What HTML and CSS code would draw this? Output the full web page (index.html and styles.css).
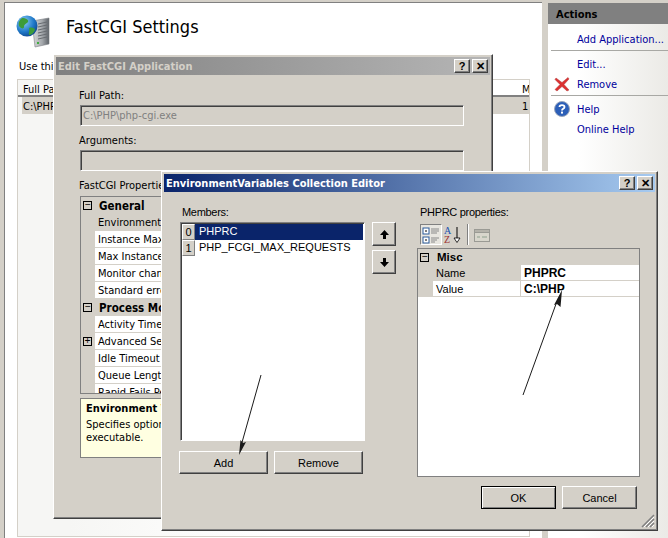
FILE: index.html
```html
<!DOCTYPE html>
<html lang="en">
<head>
    <meta charset="UTF-8">
    <meta name="viewport" content="width=device-width, initial-scale=1.0">
    <title>FastCGI Settings</title>
    <link rel="stylesheet" href="styles.css">
</head>
<body>
<div class="desktop">
    <div class="main">
        <div class="page-head">
            <svg class="page-icon" width="36" height="34" viewBox="0 0 36 34">
                <defs>
                    <linearGradient id="srv" x1="0" x2="1" y1="0" y2="0">
                        <stop offset="0" stop-color="#dcdcdc"/>
                        <stop offset="0.6" stop-color="#a4a8ac"/>
                        <stop offset="1" stop-color="#5d6268"/>
                    </linearGradient>
                    <radialGradient id="glb" cx="0.35" cy="0.3" r="0.8">
                        <stop offset="0" stop-color="#8fd0f5"/>
                        <stop offset="0.6" stop-color="#1f78c8"/>
                        <stop offset="1" stop-color="#0d3f86"/>
                    </radialGradient>
                </defs>
                <path d="M16 6 L33 3 V29 L19 32 Z" fill="url(#srv)" stroke="#7c8084" stroke-width="0.6"/>
                <path d="M22 9 L31 7 M22 12 L31 10 M22 15 L31 13 M22 18 L31 16 M22 21 L31 19 M22 24 L31 22" stroke="#676b70" stroke-width="1"/>
                <rect x="21" y="27" width="2" height="2" fill="#3fae3f"/>
                <circle cx="11" cy="11" r="10.5" fill="url(#glb)"/>
                <path d="M6 3 C10 3 13 5 12 7 C10 9 8 9 8 12 C8 14 5 14 3 11 C2 8 3 5 6 3 Z M13 13 C16 12 19 13 19 15 C18 18 15 20 13 20 C12 18 14 16 13 13 Z" fill="#3d9c3a"/>
            </svg>
            <h1 class="page-title">FastCGI Settings</h1>
        </div>
        <p class="page-hint">Use this feature to configure FastCGI</p>
        <div class="app-list">
            <div class="app-head">
                <span class="col-path">Full Path</span>
                <span class="col-max">Max</span>
            </div>
            <div class="app-row">
                <span class="col-path">C:\PHP\php-cgi.exe</span>
                <span class="col-max">1</span>
            </div>
        </div>
    </div>

    <div class="actions">
        <div class="actions-head">Actions</div>
        <ul class="action-group">
            <li class="action">Add Application...</li>
        </ul>
        <ul class="action-group">
            <li class="action">Edit...</li>
            <li class="action">
                <svg class="action-icon" width="16" height="16" viewBox="0 0 16 16">
                    <path d="M2 2 L8 6.5 L14 1.5 L15 3 L10 8.5 L15 14 L13 15 L8 10.5 L3 15 L1 13.5 L6 8.5 L1 3.5 Z" fill="#dc3030" stroke="#b04040" stroke-width="0.5"/>
                </svg>
                Remove
            </li>
        </ul>
        <ul class="action-group">
            <li class="action">
                <svg class="action-icon" width="16" height="16" viewBox="0 0 16 16">
                    <circle cx="8" cy="8" r="7.5" fill="#2c5fb8" stroke="#9aa6bc"/>
                    <path d="M5.5 6 C5.5 3.5 10.5 3.5 10.5 6 C10.5 8 8 7.7 8 9.5" fill="none" stroke="#fff" stroke-width="1.8"/>
                    <rect x="7" y="10.6" width="2" height="2" fill="#fff"/>
                </svg>
                Help
            </li>
            <li class="action">Online Help</li>
        </ul>
    </div>
</div>

<div class="window edit-window">
    <div class="title-bar inactive">
        <span>Edit FastCGI Application</span>
        <div class="title-buttons">
            <button class="title-btn">?</button>
            <button class="title-btn">&#10005;</button>
        </div>
    </div>
    <div class="edit-body">
        <div class="edit-label first">Full Path:</div>
        <div class="text-field disabled">C:\PHP\php-cgi.exe</div>
        <div class="edit-label">Arguments:</div>
        <div class="text-field"></div>
        <div class="edit-label">FastCGI Properties:</div>
        <div class="prop-grid edit-grid">
            <div class="prop-row group"><span class="gutter"><i class="toggle">&minus;</i></span><span>General</span></div>
            <div class="prop-row current"><span class="gutter"></span><span class="prop-name">Environment Variables</span></div>
            <div class="prop-row"><span class="gutter"></span><span class="prop-name">Instance MaxRequests</span></div>
            <div class="prop-row"><span class="gutter"></span><span class="prop-name">Max Instances</span></div>
            <div class="prop-row"><span class="gutter"></span><span class="prop-name">Monitor changes to file</span></div>
            <div class="prop-row"><span class="gutter"></span><span class="prop-name">Standard error mode</span></div>
            <div class="prop-row group"><span class="gutter"><i class="toggle">&minus;</i></span><span>Process Model</span></div>
            <div class="prop-row"><span class="gutter"></span><span class="prop-name">Activity Timeout</span></div>
            <div class="prop-row"><span class="gutter"><i class="toggle">+</i></span><span class="prop-name">Advanced Settings</span></div>
            <div class="prop-row"><span class="gutter"></span><span class="prop-name">Idle Timeout</span></div>
            <div class="prop-row"><span class="gutter"></span><span class="prop-name">Queue Length</span></div>
            <div class="prop-row"><span class="gutter"></span><span class="prop-name">Rapid Fails PerMinute</span></div>
        </div>
        <div class="help-box">
            <b>Environment Variables</b>
            <p>Specifies optional environment variables for the<br>executable.</p>
        </div>
    </div>
</div>

<div class="window editor-window">
    <div class="title-bar active">
        <span>EnvironmentVariables Collection Editor</span>
        <div class="title-buttons">
            <button class="title-btn">?</button>
            <button class="title-btn">&#10005;</button>
        </div>
    </div>
    <div class="editor-body">
        <div class="members-col">
            <div class="col-label">Members:</div>
            <div class="members-wrap">
                <div class="member-list">
                    <div class="member selected"><span class="member-index">0</span><span class="member-name">PHPRC</span></div>
                    <div class="member"><span class="member-index">1</span><span class="member-name">PHP_FCGI_MAX_REQUESTS</span></div>
                </div>
                <div class="move-buttons">
                    <button class="btn move-btn">
                        <svg width="11" height="11" viewBox="0 0 11 11"><path d="M5.5 1 L10 6 H7 V10 H4 V6 H1 Z" fill="#000"/></svg>
                    </button>
                    <button class="btn move-btn">
                        <svg width="11" height="11" viewBox="0 0 11 11"><path d="M5.5 10 L10 5 H7 V1 H4 V5 H1 Z" fill="#000"/></svg>
                    </button>
                </div>
            </div>
            <div class="member-buttons">
                <button class="btn wide-btn">Add</button>
                <button class="btn wide-btn">Remove</button>
            </div>
        </div>
        <div class="props-col">
            <div class="col-label">PHPRC properties:</div>
            <div class="toolbar">
                <span class="tool pressed">
                    <svg width="18" height="18" viewBox="0 0 18 18">
                        <rect x="1" y="2" width="6" height="6" fill="#fff" stroke="#2a5a9a"/>
                        <rect x="1" y="11" width="6" height="6" fill="#fff" stroke="#2a5a9a"/>
                        <path d="M3 5 H5 M3 14 H5" stroke="#000"/>
                        <path d="M9 3 H17 M9 5 H17 M9 7 H15 M9 12 H17 M9 14 H15 M9 16 H13" stroke="#8a8a8a"/>
                    </svg>
                </span>
                <span class="tool">
                    <svg width="20" height="18" viewBox="0 0 20 18">
                        <text x="1" y="8" class="az-a">A</text>
                        <text x="1" y="17" class="az-z">Z</text>
                        <path d="M14 1 V15" stroke="#000"/>
                        <path d="M11 12 L14 16.5 L17 12 Z" fill="#fff" stroke="#000" stroke-width="0.8"/>
                    </svg>
                </span>
                <span class="tool-sep"></span>
                <span class="tool">
                    <svg width="16" height="16" viewBox="0 0 16 16">
                        <rect x="0.5" y="2.5" width="15" height="12" fill="#d8d6cc" stroke="#9a9a94"/>
                        <rect x="0.5" y="2.5" width="15" height="3" fill="#b4b2aa" stroke="#9a9a94"/>
                        <path d="M3 10 H6 M8 10 H13" stroke="#8ea08e"/>
                    </svg>
                </span>
            </div>
            <div class="prop-grid editor-grid">
                <div class="prop-row group"><span class="gutter"><i class="toggle">&minus;</i></span><span>Misc</span></div>
                <div class="prop-row current"><span class="gutter"></span><span class="prop-name narrow">Name</span><span class="prop-value">PHPRC</span></div>
                <div class="prop-row"><span class="gutter"></span><span class="prop-name narrow">Value</span><span class="prop-value">C:\PHP</span></div>
            </div>
            <div class="dialog-buttons">
                <button class="btn dialog-btn default">OK</button>
                <button class="btn dialog-btn">Cancel</button>
            </div>
        </div>
    </div>
    <svg class="grip" width="14" height="14" viewBox="0 0 14 14">
        <path d="M13 1 L1 13 M13 5 L5 13 M13 9 L9 13" stroke="#808080" stroke-width="1.5"/>
        <path d="M13 3 L3 13 M13 7 L7 13 M13 11 L11 13" stroke="#fff"/>
    </svg>
</div>

<!-- hand drawn arrows on top of the screenshot -->
<svg class="arrows" width="668" height="538" viewBox="0 0 668 538">
    <path d="M261 375 L241 446" stroke="#1a1a1a" stroke-width="1" fill="none"/>
    <path d="M239 455 L240.5 440 L243 443 L246 442 Z" fill="#1a1a1a"/>
    <path d="M523 395 L556 304" stroke="#1a1a1a" stroke-width="1" fill="none"/>
    <path d="M562 290 L560.5 307 L557 304 L554 305 Z" fill="#1a1a1a"/>
</svg>
</body>
</html>
```

FILE: styles.css
```css
* {
    box-sizing: border-box;
}
html, body {
    margin: 0;
    height: 100%;
}
body {
    position: relative;
    width: 668px;
    height: 538px;
    overflow: hidden;
    background-color: #d4d0c8;
    font-family: "DejaVu Sans Condensed", "DejaVu Sans", sans-serif;
    font-stretch: condensed;
    font-size: 11px;
    line-height: 14px;
    color: #000;
}
ul {
    list-style: none;
    margin: 0;
    padding: 0;
}
button {
    font: inherit;
    color: inherit;
    padding: 0;
    background-color: #d4d0c8;
}

.desktop {
    display: flex;
    gap: 6px;
    height: 538px;
    padding: 2px 0 0 4px;
}

/* main page behind the dialogs */
.main {
    width: 538px;
    padding-left: 12px;
    background: #fff;
    border-top: 1px solid #808080;
    border-left: 1px solid #808080;
}
.page-head {
    display: flex;
    align-items: center;
    height: 46px;
    margin-left: -1px;
    padding-top: 3px;
}
.page-icon {
    flex: none;
    align-self: flex-start;
    margin-top: 9px;
}
.page-title {
    margin: -2px 0 0 14px;
    font-size: 18px;
    font-weight: normal;
    line-height: 22px;
}
.page-hint {
    margin: 11px 0 0 2px;
}
.app-list {
    height: 458px;
    margin-top: 5px;
    width: 513px;
    border: 1px solid #d4d0c8;
    background: linear-gradient(to right, #f6f6f4 10%, #fff 50%);
}
.app-head {
    display: flex;
    height: 17px;
    padding-left: 5px;
    line-height: 19px;
    border-bottom: 2px solid #808080;
}
.app-row {
    display: flex;
    height: 17px;
    margin-left: 4px;
    padding-left: 1px;
    line-height: 19px;
    background: #d4d0c8;
}
.col-path {
    width: 495px;
    white-space: nowrap;
}
.col-max {
    width: 12px;
    padding-left: 5px;
    overflow: hidden;
}

/* actions pane */
.actions {
    flex: 1;
    margin-top: 1px;
    background: linear-gradient(to right, #fff 25%, #ebeae6);
}
.actions-head {
    height: 21px;
    padding-left: 8px;
    background: #808080;
    font-weight: bold;
    line-height: 23px;
}
.action-group {
    padding: 3px 0 1px;
    border-bottom: 1px solid #a8a8a4;
    margin-left: 3px;
}
.action-group:first-of-type {
    padding-top: 5px;
}
.action-group:last-child {
    border-bottom: none;
}
.action {
    position: relative;
    height: 20px;
    padding-left: 26px;
    color: #00009c;
    line-height: 22px;
    white-space: nowrap;
}
.action-icon {
    position: absolute;
    left: 3px;
    top: 2px;
}

/* windows */
.window {
    position: absolute;
    padding: 2px;
    background: #d4d0c8;
    border: 1px solid;
    border-color: #fff #404040 #404040 #fff;
    box-shadow: inset -1px -1px 0 #808080;
}
.edit-window {
    left: 53px;
    top: 54px;
    width: 440px;
    height: 465px;
}
.editor-window {
    left: 161px;
    top: 171px;
    width: 497px;
    height: 360px;
}
.title-bar {
    display: flex;
    justify-content: space-between;
    align-items: center;
    height: 18px;
    padding: 0 2px;
    font-weight: bold;
    line-height: 16px;
}
.title-bar > span {
    padding-top: 2px;
}
.title-bar.inactive {
    background: linear-gradient(to right, #808080, #b5b5b5);
    color: #d4d0c8;
}
.title-bar.active {
    background: linear-gradient(to right, #0a246a, #a6caf0);
    color: #fff;
}
.title-buttons {
    display: flex;
    gap: 2px;
}
.title-btn {
    width: 16px;
    height: 14px;
    border: 1px solid;
    border-color: #fff #404040 #404040 #fff;
    box-shadow: inset -1px -1px 0 #808080;
    color: #000;
    font-family: "Liberation Sans", sans-serif;
    font-size: 11px;
    font-weight: bold;
    line-height: 11px;
}

/* edit dialog */
.edit-body {
    padding-left: 23px;
}
.edit-label {
    margin-top: 8px;
}
.edit-label.first {
    margin-top: 14px;
}
.text-field {
    width: 384px;
    height: 21px;
    margin: 2px 0 0 1px;
    padding-left: 2px;
    border: 1px solid;
    border-color: #808080 #fff #fff #808080;
    box-shadow: inset 1px 1px 0 #404040;
    line-height: 19px;
}
.text-field.disabled {
    color: #808080;
}
.prop-grid {
    background: #fff;
    border: 1px solid #808080;
}
.edit-grid {
    width: 330px;
    height: 198px;
    margin: 3px 0 0 1px;
    overflow: hidden;
}
.prop-row {
    display: flex;
    height: 17px;
    line-height: 18px;
    white-space: nowrap;
}
.prop-row.group {
    background: #d4d0c8;
    font-weight: bold;
    font-size: 11.5px;
}
.prop-row.group span:last-child {
    padding-left: 4px;
}
.gutter {
    display: flex;
    align-items: center;
    flex: none;
    width: 14px;
    padding-left: 2px;
    background: #d4d0c8;
}
.toggle {
    display: block;
    width: 9px;
    height: 9px;
    border: 1px solid #000;
    background: transparent;
    font-family: "Liberation Mono", monospace;
    font-style: normal;
    font-weight: normal;
    font-size: 10px;
    line-height: 7px;
    text-align: center;
}
.prop-name {
    flex: 1;
    padding-left: 3px;
    border-bottom: 1px solid #d4d0c8;
}
.prop-row.current .prop-name {
    background: #d4d0c8;
}
.help-box {
    width: 330px;
    height: 60px;
    margin: 4px 0 0 1px;
    padding: 3px 5px;
    background: #ffffe1;
    border: 1px solid #808080;
    line-height: 13px;
}
.help-box p {
    margin: 3px 0 0;
}

/* collection editor */
.editor-body {
    display: flex;
    padding: 13px 0 0 15px;
    font-family: "Liberation Sans", sans-serif;
    font-stretch: normal;
}
.members-col {
    width: 238px;
}
.col-label {
    height: 14px;
    padding-left: 3px;
    letter-spacing: -0.3px;
}
.members-wrap {
    display: flex;
    gap: 7px;
    margin: 3px 0 0 1px;
}
.member-list {
    width: 185px;
    height: 219px;
    padding: 1px;
    background: #fff;
    border: 1px solid;
    border-color: #808080 #fff #fff #808080;
    box-shadow: inset 1px 1px 0 #404040;
}
.member {
    display: flex;
    height: 16px;
    line-height: 15px;
}
.member-index {
    flex: none;
    width: 13px;
    border: 1px solid;
    border-color: #fff #808080 #808080 #fff;
    background: #d4d0c8;
    text-align: center;
}
.member-name {
    flex: 1;
    padding-left: 4px;
    white-space: nowrap;
}
.member.selected .member-name {
    background: #0a246a;
    color: #fff;
}
.move-buttons {
    display: flex;
    flex-direction: column;
    gap: 4px;
}
.btn {
    display: flex;
    align-items: center;
    justify-content: center;
    border: 1px solid;
    border-color: #fff #404040 #404040 #fff;
    box-shadow: inset -1px -1px 0 #808080;
}
.move-btn {
    width: 24px;
    height: 24px;
}
.member-buttons {
    display: flex;
    gap: 6px;
    margin-top: 10px;
}
.wide-btn {
    width: 89px;
    height: 23px;
}
.props-col {
    width: 223px;
}
.toolbar {
    display: flex;
    align-items: center;
    height: 21px;
    margin-top: 5px;
    padding-left: 3px;
    font-family: "Liberation Serif", serif;
}
.tool {
    display: flex;
    align-items: center;
    justify-content: center;
    width: 22px;
    height: 21px;
}
.tool.pressed {
    border: 1px solid;
    border-color: #808080 #fff #fff #808080;
    background: #e8e6e0;
}
.tool-sep {
    width: 2px;
    height: 21px;
    margin: 0 2px 0 3px;
    border-left: 1px solid #808080;
    border-right: 1px solid #fff;
}
.az-a {
    font-size: 10px;
    fill: #2050b0;
}
.az-z {
    font-size: 10px;
    fill: #a03030;
}
.editor-grid {
    height: 229px;
    margin-top: 3px;
    font-size: 11px;
}
.editor-grid .prop-row {
    height: 16px;
    line-height: 17px;
}
.editor-grid .gutter {
    width: 15px;
}
.prop-name.narrow {
    flex: none;
    width: 87px;
    padding-left: 3px;
}
.prop-value {
    flex: 1;
    padding-left: 3px;
    background: #fff;
    font-size: 12px;
    font-weight: bold;
    border-left: 1px solid #d4d0c8;
    border-bottom: 1px solid #d4d0c8;
}
.dialog-buttons {
    display: flex;
    justify-content: flex-end;
    gap: 6px;
    margin: 9px 3px 0 0;
}
.dialog-btn {
    width: 75px;
    height: 23px;
}
.dialog-btn.default {
    outline: 1px solid #000;
    outline-offset: -1px;
    border-color: #000;
    box-shadow: inset 1px 1px 0 #fff, inset -1px -1px 0 #808080;
}

.grip {
    position: absolute;
    right: 2px;
    bottom: 2px;
}
.arrows {
    position: absolute;
    left: 0;
    top: 0;
    pointer-events: none;
}
```
